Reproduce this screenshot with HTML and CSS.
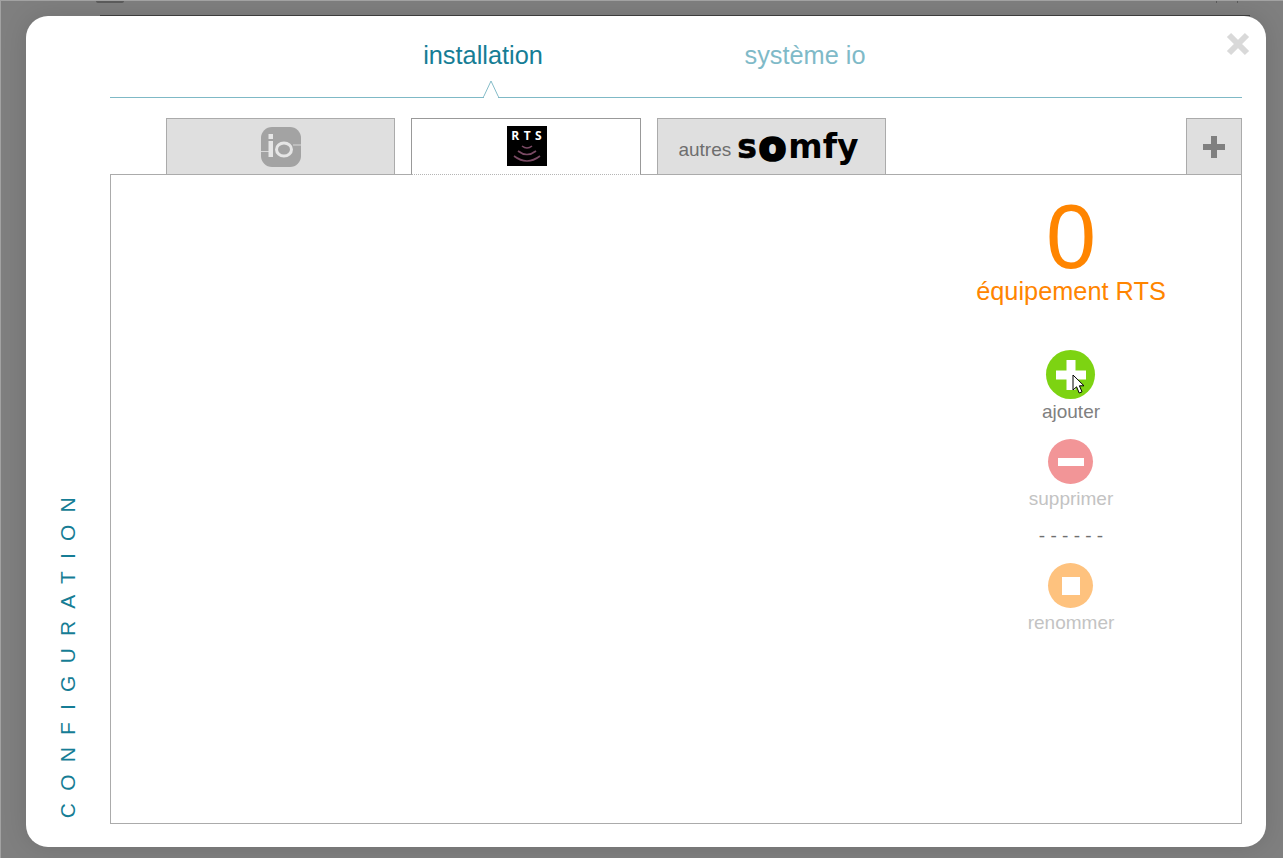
FILE: index.html
```html
<!DOCTYPE html>
<html lang="fr">
<head>
<meta charset="utf-8">
<title>Configuration</title>
<link rel="stylesheet" href="styles.css">
</head>
<body>
<div class="backdrop-marks"><span class="mark-a"></span><span class="mark-b"></span><span class="mark-c"></span></div>
<div class="modal">
  <button class="close" aria-label="Fermer"><svg width="26" height="26" viewBox="0 0 26 26"><path d="M4 4L22 22M22 4L4 22" stroke="#d9d9d9" stroke-width="6"/></svg></button>
  <aside class="side"><span class="side-label">CONFIGURATION</span></aside>
  <main class="main">
    <nav class="nav">
      <a class="nav-item active">installation</a>
      <a class="nav-item">système io</a>
      <svg class="notch" width="18" height="18" viewBox="0 0 18 18"><path d="M0.5 17L8 1L15.5 17" fill="#fff" stroke="#85bcc8" stroke-width="1"/><path d="M1 17.5H15" stroke="#fff" stroke-width="2"/></svg>
    </nav>
    <div class="tabs">
      <div class="tab">
        <svg width="40" height="40" viewBox="0 0 40 40"><rect width="40" height="40" rx="11" fill="#a3a3a3"/><path d="M0 24.5H8M32 18H40" stroke="#d8d8d8" stroke-width="1"/><rect x="7.5" y="7" width="4.5" height="5" fill="#e6e6e6"/><rect x="7.5" y="14" width="4.5" height="16" fill="#e6e6e6"/><ellipse cx="23" cy="22.5" rx="7.5" ry="6.5" fill="none" stroke="#e6e6e6" stroke-width="3"/></svg>
      </div>
      <div class="tab current">
        <div class="rts">
          <span class="rts-text">RTS</span>
          <svg class="rts-waves" width="32" height="22" viewBox="0 0 32 22"><g fill="none" stroke="#7a4a64" stroke-width="1.6"><path d="M11 2Q16 6 21 2"/><path d="M7 7Q16 14 25 7"/><path d="M3 12Q16 22 29 12"/></g></svg>
        </div>
      </div>
      <div class="tab other">
        <span class="other-text">autres</span><span class="somfy"><span class="somfy-s">s</span><span class="somfy-o">o</span>mfy</span>
      </div>
      <div class="tab add"><svg width="24" height="24" viewBox="0 0 24 24"><path d="M12 1V23M1 12H23" stroke="#808080" stroke-width="6"/></svg></div>
    </div>
    <section class="panel">
      <div class="actions">
        <div class="count">0</div>
        <div class="count-label">équipement RTS</div>
        <div class="action first">
          <span class="disc green"><svg width="32" height="32" viewBox="0 0 32 32"><path d="M16 1V31M1 16H31" stroke="#fff" stroke-width="9"/></svg>
            <svg class="cursor" width="14" height="21" viewBox="0 0 14 21"><path d="M1 1V16L4.6 12.8L7.2 19L10 17.8L7.4 11.8H12Z" fill="#fff" stroke="#000" stroke-width="1"/></svg></span>
          <span class="action-label">ajouter</span>
        </div>
        <div class="action">
          <span class="disc red"><svg width="26" height="8" viewBox="0 0 26 8"><rect width="26" height="8" fill="#fff"/></svg></span>
          <span class="action-label muted">supprimer</span>
        </div>
        <div class="dashes">- - - - - -</div>
        <div class="action">
          <span class="disc orange"><svg width="18" height="18" viewBox="0 0 18 18"><rect width="18" height="18" fill="#fff"/></svg></span>
          <span class="action-label muted">renommer</span>
        </div>
      </div>
    </section>
  </main>
</div>
</body>
</html>
```
FILE: styles.css
```css
* { box-sizing: border-box; }
html, body { margin: 0; height: 100%; }
body {
  background: #7f7f7f;
  border-top: 1px solid #a2a2a2;
  border-left: 1px solid #a2a2a2;
  font-family: "Liberation Sans", Arial, sans-serif;
  padding: 15px 17px 11px 25px;
  height: 858px;
  overflow: hidden;
  position: relative;
}
.backdrop-marks span { position: absolute; top: 0; height: 2px; background: #5c5c5c; }
.mark-a { left: 95px; width: 28px; border-radius: 0 0 8px 8px; }
.mark-b { left: 1215px; width: 1px; }
.mark-c { left: 1236px; width: 1px; }
.modal {
  position: relative;
  height: 100%;
  background: #fff;
  border-radius: 22px;
  display: flex;
  box-shadow: 0 0 24px rgba(0, 0, 0, .12);
}
.modal::before {
  content: "";
  position: absolute;
  top: -1px;
  left: 74px;
  right: 16px;
  height: 1px;
  background: #3c3c3c;
}
.close {
  position: absolute;
  top: 15px;
  right: 15px;
  padding: 0;
  border: 0;
  background: none;
  line-height: 0;
}
.side {
  width: 84px;
  flex: none;
  display: flex;
  align-items: flex-end;
  padding: 0 0 29px 32px;
}
.side-label {
  writing-mode: vertical-rl;
  transform: rotate(180deg);
  font-size: 21px;
  letter-spacing: 12.2px;
  color: #167d95;
  line-height: 20px;
  white-space: nowrap;
}
.main {
  flex: 1;
  display: flex;
  flex-direction: column;
  margin: 0 24px 23px 0;
  min-width: 0;
}
.nav {
  position: relative;
  height: 82px;
  flex: none;
  display: flex;
  padding-left: 212px;
  padding-top: 24px;
  border-bottom: 1px solid #7fb9c6;
}
.nav-item {
  width: 322px;
  text-align: center;
  font-size: 25.33px;
  line-height: 30px;
  color: #7fbac8;
}
.nav-item.active { color: #167d95; }
.notch { position: absolute; left: 373px; bottom: -1px; }
.tabs {
  margin-top: 20px;
  height: 56px;
  flex: none;
  display: flex;
  padding-left: 56px;
  gap: 16px;
}
.tab {
  width: 229px;
  height: 56px;
  background: #dfdfdf;
  border: 1px solid #ababab;
  border-bottom: 0;
  display: flex;
  align-items: center;
  justify-content: center;
}
.tab.current {
  width: 230px;
  height: 57px;
  background: #fff;
  border-color: #999;
  border-bottom: 1px dotted #b5b5b5;
  padding: 0 0 1px 1px;
  position: relative;
  z-index: 1;
}
.tab.other { gap: 6px; padding-right: 6px; }
.other-text { font-size: 19px; color: #6e6e6e; padding-top: 6px; }
.somfy {
  font-family: "DejaVu Sans", sans-serif;
  font-weight: 700;
  font-size: 33px;
  line-height: 40px;
  color: #000;
  position: relative;
  top: -1px;
}
.somfy-s { -webkit-text-stroke: .6px #000; }
.somfy-o {
  font-size: 40px;
  line-height: 40px;
  -webkit-text-stroke: 2.6px #000;
  position: relative;
  top: 2px;
  margin: 0 2px;
}
.tab.add {
  width: 56px;
  margin-left: auto;
  padding-right: 1px;
}
.rts {
  width: 40px;
  height: 40px;
  background: #000;
  display: flex;
  flex-direction: column;
  align-items: center;
}
.rts-text {
  color: #fff;
  font-family: "Open Sans", sans-serif;
  font-weight: 700;
  font-size: 12px;
  letter-spacing: 4.5px;
  margin-right: -4.5px;
  line-height: 13px;
  padding-top: 3px;
}
.rts-waves { margin-top: 2px; }
.panel {
  flex: 1;
  border: 1px solid #ababab;
  display: flex;
  justify-content: flex-end;
  padding-right: 70px;
  min-height: 0;
}
.actions {
  width: 200px;
  display: flex;
  flex-direction: column;
  align-items: center;
  padding-top: 22px;
}
.count {
  font-size: 90px;
  line-height: 80px;
  color: #ff8500;
}
.count-label {
  font-size: 25.33px;
  line-height: 28px;
  color: #ff8500;
}
.action {
  display: flex;
  flex-direction: column;
  align-items: center;
  margin-top: 16px;
}
.action.first { margin-top: 45px; }
.disc {
  width: 45px;
  height: 45px;
  border-radius: 50%;
  display: flex;
  align-items: center;
  justify-content: center;
}
.disc.green { width: 49px; height: 49px; background: #7dd312; position: relative; }
.disc.red { background: #f29597; }
.disc.orange { background: #fec27e; }
.cursor { position: absolute; left: 26px; top: 24px; }
.action-label {
  font-size: 19px;
  line-height: 22px;
  margin-top: 2px;
  color: #808080;
}
.action-label.muted { color: #c3c3c3; margin-top: 4px; }
.dashes {
  font-size: 19px;
  line-height: 20px;
  color: #6f6f6f;
  margin-top: 16px;
  margin-bottom: 1px;
  white-space: nowrap;
}
```
